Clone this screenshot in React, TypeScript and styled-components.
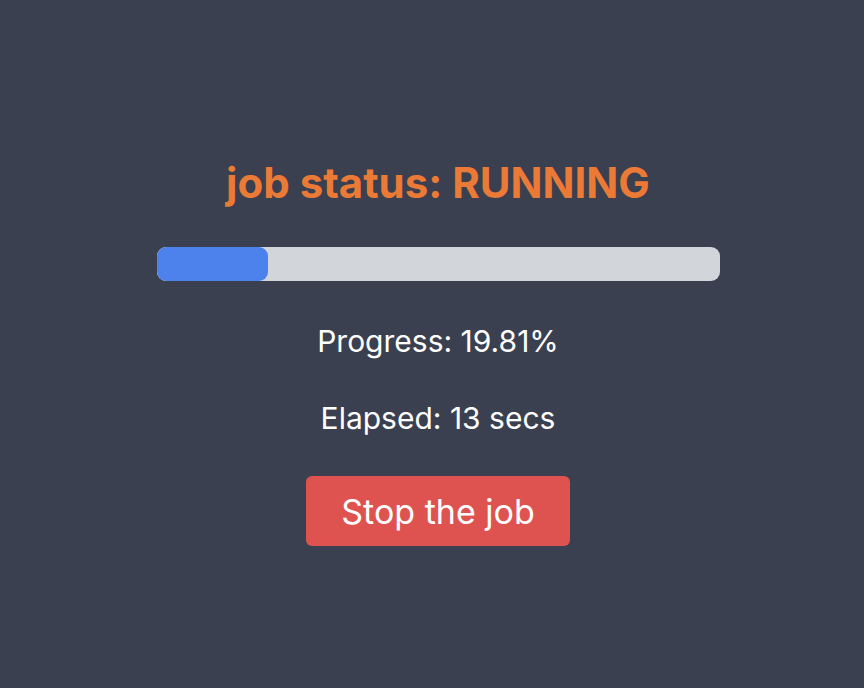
import React from 'react';
import styled, { createGlobalStyle } from 'styled-components';

const GlobalStyle = createGlobalStyle`
  html, body {
    margin: 0;
    padding: 0;
    background: #3a4050;
  }
  body {
    font-family: Inter, "Noto Sans", sans-serif;
  }
`;

const Page = styled.div`
  box-sizing: border-box;
  min-height: 100vh;
  padding: 16px 0 0 12px;
  display: flex;
  flex-direction: column;
  align-items: center;
  justify-content: center;
  color: #ffffff;
`;

const Title = styled.h1`
  margin: 0 0 39px;
  font-size: 42px;
  font-weight: 700;
  line-height: 50px;
  color: #ea7a35;
`;

const Track = styled.div`
  width: 563px;
  height: 34px;
  border-radius: 9px;
  background: #d2d5da;
  overflow: hidden;
  margin-bottom: 40px;
`;

const Fill = styled.div`
  height: 100%;
  border-radius: 9px;
  background: #4d82ed;
`;

const Info = styled.p`
  margin: 0 0 37px;
  font-size: 30px;
  line-height: 40px;
`;

const StopButton = styled.button`
  margin-top: 1px;
  width: 264px;
  height: 70px;
  border: none;
  border-radius: 6px;
  background: #de534f;
  color: #ffffff;
  font-family: Inter, "Noto Sans", sans-serif;
  font-size: 34px;
  cursor: pointer;
`;

export default function App() {
  const progress = 19.81;
  const elapsed = 13;

  return (
    <>
      <GlobalStyle />
      <Page>
        <Title>job status: RUNNING</Title>
        <Track>
          <Fill style={{ width: `${progress}%` }} />
        </Track>
        <Info>Progress: {progress}%</Info>
        <Info>Elapsed: {elapsed} secs</Info>
        <StopButton>Stop the job</StopButton>
      </Page>
    </>
  );
}
